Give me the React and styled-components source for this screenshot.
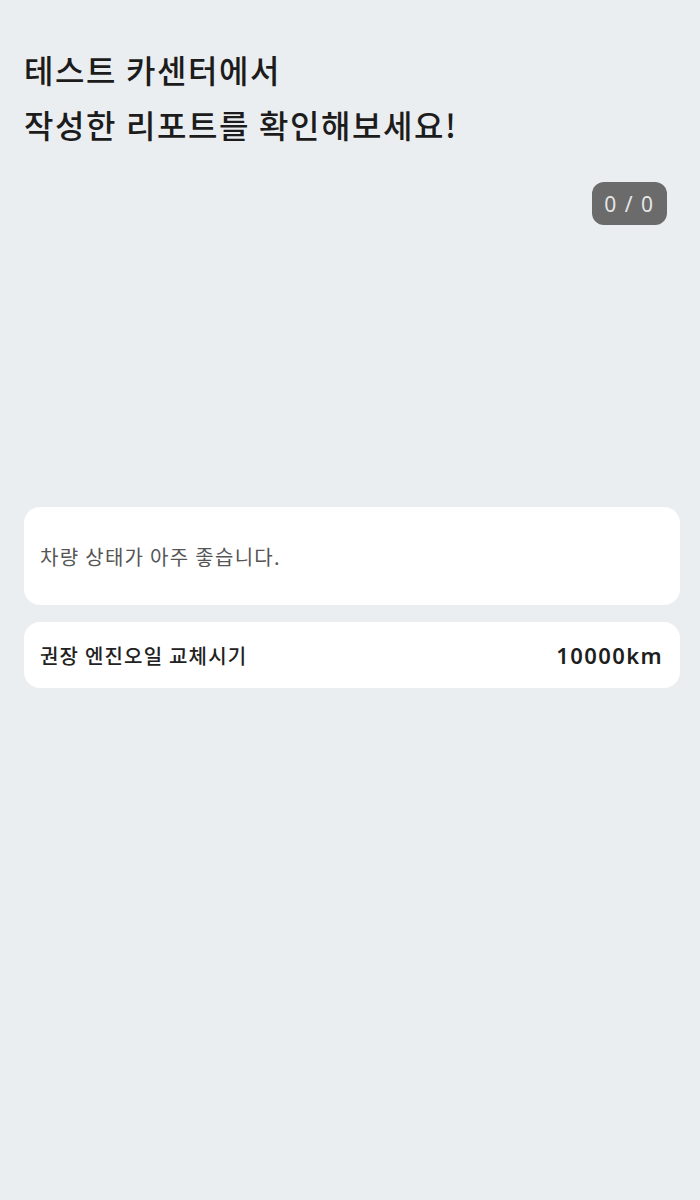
import React from "react";
import styled, { createGlobalStyle } from "styled-components";

const GlobalStyle = createGlobalStyle`
    html, body {
        margin: 0;
        padding: 0;
        background-color: #ebeef1;
    }
    body {
        font-family: "Noto Sans CJK KR", "Noto Sans", sans-serif;
    }
`;

const Page = styled.div`
    width: 700px;
    min-height: 1200px;
    box-sizing: border-box;
    padding: 42px 20px 0 24px;
    background-color: #ebeef1;
`;

const Title = styled.h1`
    margin: 0;
    font-size: 32px;
    font-weight: 500;
    line-height: 55px;
    color: #1c1c1c;
    letter-spacing: 1.6px;
`;

const CounterRow = styled.div`
    display: flex;
    justify-content: flex-end;
    margin-top: 30px;
    padding-right: 13px;
`;

const Counter = styled.div`
    display: flex;
    align-items: center;
    justify-content: center;
    width: 75px;
    height: 43px;
    border-radius: 12px;
    background-color: #6b6b6b;
    color: #e6e6e6;
    font-size: 21px;
    letter-spacing: 1.5px;
    font-family: "Noto Sans", sans-serif;
`;

const Slides = styled.div`
    height: 282px;
`;

const Card = styled.div`
    display: flex;
    align-items: center;
    justify-content: space-between;
    box-sizing: border-box;
    height: ${(p) => p.$height}px;
    padding: 0 17px 0 16px;
    margin-bottom: 17px;
    border-radius: 16px;
    background-color: #ffffff;
`;

const Summary = styled.p`
    margin: 0;
    font-size: 20px;
    letter-spacing: 1.3px;
    color: #555555;
`;

const Label = styled.span`
    font-size: 20px;
    font-weight: 500;
    letter-spacing: 1.2px;
    color: #222222;
`;

const Value = styled.span`
    font-family: "Noto Sans", sans-serif;
    font-size: 22px;
    font-weight: 600;
    letter-spacing: 1.4px;
    color: #1e1e1e;
`;

const App = () => {
    return (
        <>
            <GlobalStyle />
            <Page>
                <Title>
                    테스트 카센터에서
                    <br />
                    작성한 리포트를 확인해보세요!
                </Title>
                <CounterRow>
                    <Counter>0 / 0</Counter>
                </CounterRow>
                <Slides />
                <Card $height={98}>
                    <Summary>차량 상태가 아주 좋습니다.</Summary>
                </Card>
                <Card $height={66}>
                    <Label>권장 엔진오일 교체시기</Label>
                    <Value>10000km</Value>
                </Card>
            </Page>
        </>
    );
};

export default App;
